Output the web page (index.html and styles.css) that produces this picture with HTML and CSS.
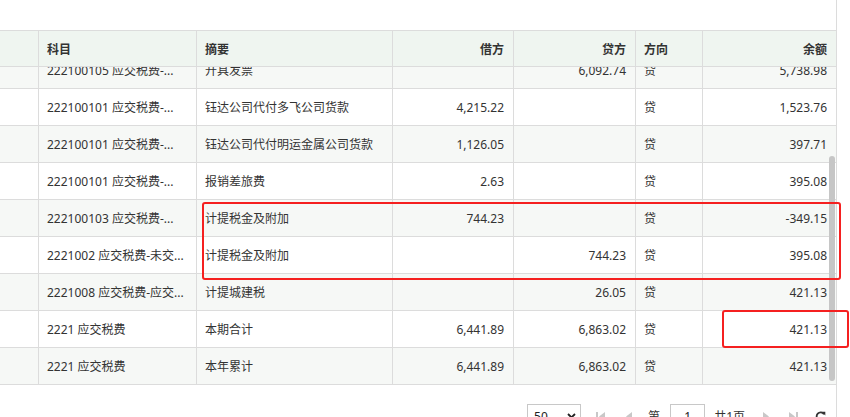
FILE: index.html
```html
<!DOCTYPE html>
<html lang="zh">
<head>
<meta charset="utf-8">
<title>明细账</title>
<link rel="stylesheet" href="styles.css">
</head>
<body>
<div class="panel">
  <div class="row head">
    <div class="cell"></div>
    <div class="cell">科目</div>
    <div class="cell">摘要</div>
    <div class="cell num">借方</div>
    <div class="cell num">贷方</div>
    <div class="cell">方向</div>
    <div class="cell num">余额</div>
  </div>
  <div class="viewport">
    <div class="rows">
      <div class="row alt">
        <div class="cell"></div><div class="cell">222100105 应交税费-...</div><div class="cell">开具发票</div><div class="cell num"></div><div class="cell num">6,092.74</div><div class="cell">贷</div><div class="cell num">5,738.98</div>
      </div>
      <div class="row">
        <div class="cell"></div><div class="cell">222100101 应交税费-...</div><div class="cell">钰达公司代付多飞公司货款</div><div class="cell num">4,215.22</div><div class="cell num"></div><div class="cell">贷</div><div class="cell num">1,523.76</div>
      </div>
      <div class="row alt">
        <div class="cell"></div><div class="cell">222100101 应交税费-...</div><div class="cell">钰达公司代付明运金属公司货款</div><div class="cell num">1,126.05</div><div class="cell num"></div><div class="cell">贷</div><div class="cell num">397.71</div>
      </div>
      <div class="row">
        <div class="cell"></div><div class="cell">222100101 应交税费-...</div><div class="cell">报销差旅费</div><div class="cell num">2.63</div><div class="cell num"></div><div class="cell">贷</div><div class="cell num">395.08</div>
      </div>
      <div class="row alt">
        <div class="cell"></div><div class="cell">222100103 应交税费-...</div><div class="cell">计提税金及附加</div><div class="cell num">744.23</div><div class="cell num"></div><div class="cell">贷</div><div class="cell num">-349.15</div>
      </div>
      <div class="row">
        <div class="cell"></div><div class="cell">2221002 应交税费-未交...</div><div class="cell">计提税金及附加</div><div class="cell num"></div><div class="cell num">744.23</div><div class="cell">贷</div><div class="cell num">395.08</div>
      </div>
      <div class="row alt">
        <div class="cell"></div><div class="cell">2221008 应交税费-应交...</div><div class="cell">计提城建税</div><div class="cell num"></div><div class="cell num">26.05</div><div class="cell">贷</div><div class="cell num">421.13</div>
      </div>
      <div class="row">
        <div class="cell"></div><div class="cell">2221 应交税费</div><div class="cell">本期合计</div><div class="cell num">6,441.89</div><div class="cell num">6,863.02</div><div class="cell">贷</div><div class="cell num">421.13</div>
      </div>
      <div class="row alt">
        <div class="cell"></div><div class="cell">2221 应交税费</div><div class="cell">本年累计</div><div class="cell num">6,441.89</div><div class="cell num">6,863.02</div><div class="cell">贷</div><div class="cell num">421.13</div>
      </div>
    </div>
    <div class="thumb"></div>
  </div>
  <div class="pager">
    <div class="size-select"><span>50</span>
      <svg class="chev" width="9" height="6" viewBox="0 0 9 6"><path d="M1 1 L4.5 4.5 L8 1" fill="none" stroke="#222" stroke-width="1.8"/></svg>
    </div>
    <span class="pg-btn first"><svg width="9" height="9" viewBox="0 0 9 9"><rect x="0" y="0" width="2" height="9" fill="#c8c8c8"/><path d="M9 0 L3 4.5 L9 9 Z" fill="#c8c8c8"/></svg></span>
    <span class="pg-btn prev"><svg width="6" height="9" viewBox="0 0 6 9"><path d="M6 0 L0 4.5 L6 9 Z" fill="#c8c8c8"/></svg></span>
    <span class="pg-label di">第</span>
    <div class="pg-input">1</div>
    <span class="pg-label gong">共1页</span>
    <span class="pg-btn next"><svg width="6" height="9" viewBox="0 0 6 9"><path d="M0 0 L6 4.5 L0 9 Z" fill="#c8c8c8"/></svg></span>
    <span class="pg-btn last"><svg width="9" height="9" viewBox="0 0 9 9"><path d="M0 0 L6 4.5 L0 9 Z" fill="#c8c8c8"/><rect x="7" y="0" width="2" height="9" fill="#c8c8c8"/></svg></span>
    <span class="pg-btn refresh"><svg width="11" height="11" viewBox="0 0 11 11"><path d="M9 3.2 A4 4 0 1 0 9.5 6.5" fill="none" stroke="#333" stroke-width="1.8"/><path d="M6.5 0.8 L10.3 0.8 L10.3 4.6 Z" fill="#333"/></svg></span>
  </div>
  <div class="mark mark-a"></div>
  <div class="mark mark-b"></div>
</div>
</body>
</html>
```

FILE: styles.css
```css
html, body {
  margin: 0;
  padding: 0;
  background: #fff;
  overflow: hidden;
}
body {
  font-family: "Noto Sans", "Noto Sans CJK SC", sans-serif;
  font-size: 12px;
  color: #333;
}
.panel {
  position: relative;
  width: 837px;
  height: 417px;
  box-sizing: border-box;
  padding-top: 30px;
  border-right: 1px solid #dcdcdc;
}
.row {
  display: grid;
  grid-template-columns: 39px 158px 196px 121px 122px 67px 133px;
  height: 37px;
  box-sizing: border-box;
  border-bottom: 1px solid #dcdcdc;
  background: #fff;
}
.row.alt {
  background: #f6f8f6;
}
.row.head {
  border-top: 1px solid #dcdcdc;
  background: #eff5f0;
  font-weight: bold;
  color: #333;
}
.cell {
  display: flex;
  align-items: center;
  padding: 0 8px 0 8px;
  box-sizing: border-box;
  border-right: 1px solid #dcdcdc;
  white-space: nowrap;
  overflow: hidden;
}
.cell:last-child {
  border-right: none;
}
.cell.num {
  justify-content: flex-end;
  padding-right: 9px;
}
.viewport {
  position: relative;
  height: 318px;
  overflow: hidden;
}
.rows {
  margin-top: -15px;
}
.thumb {
  position: absolute;
  right: 1px;
  top: 89px;
  width: 6px;
  height: 225px;
  border-radius: 3px;
  background: #c6c6c6;
}
.pager {
  display: flex;
  align-items: center;
  justify-content: flex-end;
  padding: 19px 10px 0 0;
  height: 24px;
}
.size-select {
  display: flex;
  align-items: center;
  justify-content: space-between;
  width: 54px;
  height: 24px;
  box-sizing: border-box;
  border: 1px solid #c8c8c8;
  padding: 0 4px 0 6px;
  color: #222;
}
.pg-btn {
  display: flex;
  align-items: center;
}
.first { margin-left: 15px; }
.prev { margin-left: 21px; }
.di { margin-left: 16px; }
.pg-input {
  margin-left: 10px;
  width: 35px;
  height: 24px;
  box-sizing: border-box;
  border: 1px solid #c8c8c8;
  display: flex;
  align-items: center;
  justify-content: center;
  color: #222;
}
.gong { margin-left: 9px; }
.next { margin-left: 18px; }
.last { margin-left: 20px; }
.refresh { margin-left: 17px; }
.pg-label { color: #333; }
.mark {
  position: absolute;
  border: 2px solid #f52020;
  border-radius: 3px;
  box-sizing: border-box;
}
.mark-a {
  left: 202px;
  top: 202px;
  width: 639px;
  height: 78px;
}
.mark-b {
  left: 722px;
  top: 310px;
  width: 127px;
  height: 38px;
}
```
